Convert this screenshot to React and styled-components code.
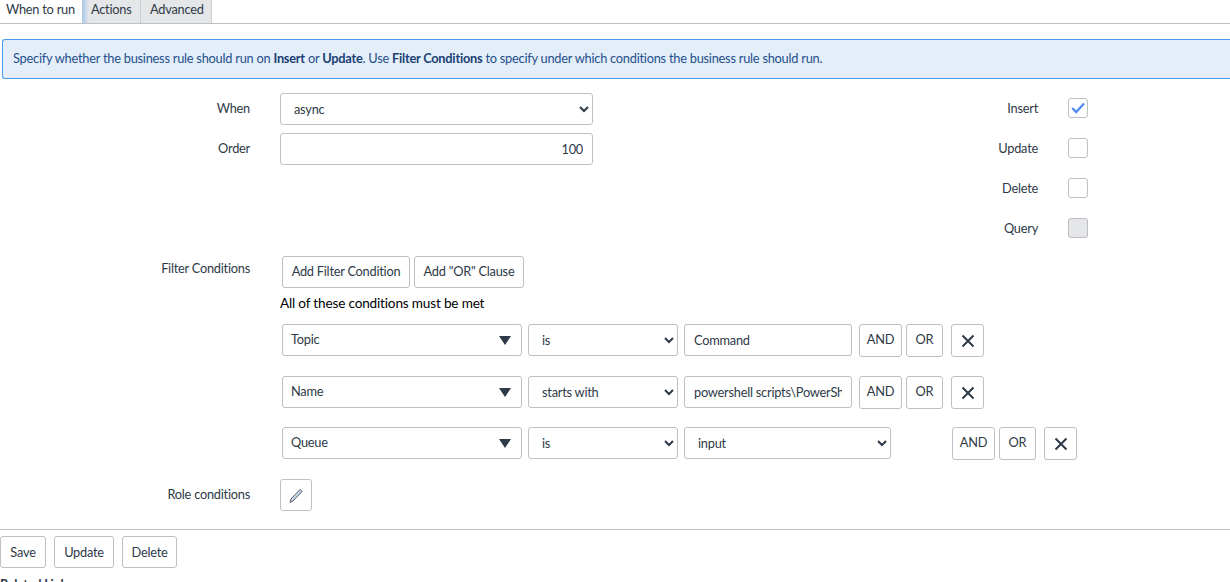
import styled, { createGlobalStyle } from "styled-components";

const GlobalStyle = createGlobalStyle`
    * { box-sizing: border-box; }
    html, body { margin: 0; height: 582px; overflow: hidden; background: #fff; }
    body, button, input, select {
        font-family: Lato, "Noto Sans", "Liberation Sans", sans-serif;
        font-size: 12.8px;
        letter-spacing: -0.24px;
        color: #2e3a47;
    }
`;

const Tabs = styled.div`
    display: flex;
    height: 24px;
    border-bottom: 1px solid #bdc0c4;
`;

const Tab = styled.div`
    height: 23px;
    line-height: 19px;
    padding-left: ${(p) => (p.$active ? 6 : 9)}px;
    width: ${(p) => p.$w}px;
    margin-left: ${(p) => (p.$first ? 1 : 0)}px;
    background: ${(p) => (p.$active ? "#fff" : "#e4e6e7")};
    border-right: 1px solid ${(p) => (p.$active ? "#fff" : "#cbced0")};
    background-image: ${(p) => (p.$first ? "linear-gradient(90deg, #a9c7ea, #e4e6e7 7px)" : "none")};
    white-space: nowrap;
`;

const Alert = styled.div`
    margin: 15px 0 10px 2px;
    height: 40px;
    padding-left: 10px;
    line-height: 37px;
    background: #e4eef9;
    border: 1px solid #4c9aee;
    border-right: 0;
    border-radius: 3px 0 0 3px;
    color: #1f4e8c;

    b { font-weight: 700; color: #1a4175; }
`;

const Top = styled.div`
    display: flex;
`;

const LeftCol = styled.div`
    width: 812px;
`;

const RightCol = styled.div`
    width: 276px;
`;

const Row = styled.div`
    display: flex;
    align-items: center;
    height: 40px;
`;

const Label = styled.div`
    width: ${(p) => p.$w || 250}px;
    text-align: right;
    padding-bottom: 2px;
    flex-shrink: 0;
`;

const Control = styled.div`
    margin-left: 30px;
    width: 313px;
`;

const baseField = `
    display: block;
    height: 32px;
    background: #fff;
    border: 1px solid #bdc0c4;
    border-radius: 3px;
    outline: none;
`;

const Select = styled.select`
    ${baseField}
    width: ${(p) => p.$w || 100}${(p) => (p.$w ? "px" : "%")};
    padding: 0 5px 0 9px;
`;

const TextInput = styled.input`
    ${baseField}
    width: ${(p) => p.$w || 100}${(p) => (p.$w ? "px" : "%")};
    padding: 0 9px;
    text-align: ${(p) => p.$align || "left"};
`;

const Check = styled.span`
    display: flex;
    align-items: center;
    justify-content: center;
    width: 20px;
    height: 20px;
    margin: 0 0 2px 30px;
    background: ${(p) => (p.$disabled ? "#e4e6e7" : "#fff")};
    border: 1px solid #bdc0c4;
    border-radius: 3px;
`;

const FilterBlock = styled.div`
    display: flex;
`;

const FilterLabel = styled(Label)`
    padding-top: 11px;
    padding-bottom: 0;
`;

const FilterBody = styled.div`
    margin: 7px 0 0 32px;
`;

const Buttons = styled.div`
    display: flex;
    gap: 4px;
`;

const Btn = styled.button`
    height: ${(p) => p.$h || 32}px;
    width: ${(p) => (p.$w ? `${p.$w}px` : "auto")};
    padding: 0 0 ${(p) => p.$lift || 0}px;
    background: #fff;
    border: 1px solid #bdc0c4;
    border-radius: 3px;
    display: inline-flex;
    align-items: center;
    justify-content: center;
    flex-shrink: 0;
`;

const AllMet = styled.div`
    margin: 7px 0 0 -2px;
    height: 29px;
    font-size: 13.6px;
    letter-spacing: -0.18px;
    color: #000;
`;

const CondRow = styled.div`
    display: flex;
    align-items: flex-start;
    gap: 6px;
    margin-top: ${(p) => p.$top || 0}px;
`;

const FieldPicker = styled.div`
    display: flex;
    align-items: center;
    justify-content: space-between;
    width: 240px;
    height: 32px;
    padding: 0 10px 2px 8px;
    border: 1px solid #bdc0c4;
    border-radius: 3px;
`;

const Triangle = styled.span`
    width: 0;
    height: 0;
    margin-top: 3px;
    border-left: 6px solid transparent;
    border-right: 6px solid transparent;
    border-top: 9px solid #2e3a47;
`;

const CondActions = styled.div`
    display: flex;
    gap: 4px;
    margin-left: ${(p) => p.$left}px;
`;

const Remove = styled(Btn)`
    margin-left: 4px;
`;

const RoleRow = styled.div`
    display: flex;
    align-items: flex-start;
    margin-top: 19px;
`;

const RoleLabel = styled(Label)`
    padding: 7px 0 0;
`;

const RoleBtn = styled(Btn)`
    margin-left: 30px;
`;

const Divider = styled.hr`
    margin: 18px 0 6px;
    border: 0;
    border-top: 1px solid #bdc0c4;
`;

const Footer = styled.div`
    display: flex;
    gap: 8px;
`;

const Related = styled.div`
    margin-top: 8px;
    font-weight: 700;
`;

function CloseIcon() {
    return (
        <svg width="14" height="14" viewBox="0 0 14 14">
            <path d="M1.5 1.5 L12.5 12.5 M12.5 1.5 L1.5 12.5" stroke="#2e3a47" strokeWidth="2" fill="none" />
        </svg>
    );
}

function PencilIcon() {
    return (
        <svg width="14" height="15" viewBox="0 0 14 15">
            <path d="M1 14.5 L2 11 L11 1.4 L13.2 3.4 L4 13 Z" fill="#c9d6e6" stroke="#47525e" strokeWidth="0.9" />
        </svg>
    );
}

function CheckIcon() {
    return (
        <svg width="14" height="12" viewBox="0 0 14 12">
            <path d="M1.2 6 L5.2 10 L13 1.4" stroke="#4f8df5" strokeWidth="2.3" fill="none" />
        </svg>
    );
}

function Condition({ field, op, value, select, top }) {
    return (
        <CondRow $top={top}>
            <FieldPicker>
                {field}
                <Triangle />
            </FieldPicker>
            <Select $w={150} defaultValue={op}>
                <option>{op}</option>
            </Select>
            {select ? (
                <Select $w={207} defaultValue={value}>
                    <option>{value}</option>
                </Select>
            ) : (
                <TextInput $w={168} defaultValue={value} />
            )}
            <CondActions $left={select ? 55 : 1}>
                <Btn $w={43} $h={33} $lift={3}>AND</Btn>
                <Btn $w={37} $h={33} $lift={3}>OR</Btn>
                <Remove $w={33} $h={33}><CloseIcon /></Remove>
            </CondActions>
        </CondRow>
    );
}

export default function App() {
    return (
        <>
            <GlobalStyle />
            <Tabs>
                <Tab $active $w={81}>When to run</Tab>
                <Tab $first $w={59}>Actions</Tab>
                <Tab $w={71}>Advanced</Tab>
            </Tabs>
            <Alert>
                Specify whether the business rule should run on <b>Insert</b> or <b>Update</b>. Use <b>Filter Conditions</b> to specify under which conditions the business rule should run.
            </Alert>
            <Top>
                <LeftCol>
                    <Row>
                        <Label>When</Label>
                        <Control>
                            <Select defaultValue="async"><option>async</option></Select>
                        </Control>
                    </Row>
                    <Row>
                        <Label>Order</Label>
                        <Control>
                            <TextInput $align="right" defaultValue="100" />
                        </Control>
                    </Row>
                </LeftCol>
                <RightCol>
                    <Row><Label $w={226}>Insert</Label><Check><CheckIcon /></Check></Row>
                    <Row><Label $w={226}>Update</Label><Check /></Row>
                    <Row><Label $w={226}>Delete</Label><Check /></Row>
                    <Row><Label $w={226}>Query</Label><Check $disabled /></Row>
                </RightCol>
            </Top>
            <FilterBlock>
                <FilterLabel>Filter Conditions</FilterLabel>
                <FilterBody>
                    <Buttons>
                        <Btn $w={128} $lift={3}>Add Filter Condition</Btn>
                        <Btn $w={110} $lift={3}>Add "OR" Clause</Btn>
                    </Buttons>
                    <AllMet>All of these conditions must be met</AllMet>
                    <Condition field="Topic" op="is" value="Command" />
                    <Condition field="Name" op="starts with" value="powershell scripts\PowerShell" top={19} />
                    <Condition field="Queue" op="is" value="input" select top={18} />
                </FilterBody>
            </FilterBlock>
            <RoleRow>
                <RoleLabel>Role conditions</RoleLabel>
                <RoleBtn $w={32}><PencilIcon /></RoleBtn>
            </RoleRow>
            <Divider />
            <Footer>
                <Btn $w={46}>Save</Btn>
                <Btn $w={60}>Update</Btn>
                <Btn $w={55}>Delete</Btn>
            </Footer>
            <Related>Related Links</Related>
        </>
    );
}
